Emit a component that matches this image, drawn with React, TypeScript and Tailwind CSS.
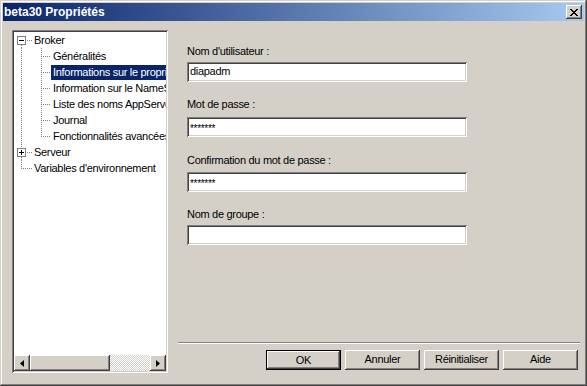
import React from 'react'

const font = "font-['Liberation_Sans',Arial,sans-serif]"
const raised = "shadow-[inset_-1px_-1px_#404040,inset_1px_1px_#fff,inset_-2px_-2px_#808080]"
const sunken = "shadow-[inset_1px_1px_#808080,inset_-1px_-1px_#fff,inset_2px_2px_#404040,inset_-2px_-2px_#d4d0c8]"

type Kind = 'root-open' | 'child' | 'child-last' | 'root-closed' | 'leaf-last'

function Gutter({ kind }: { kind: Kind }) {
    const dot = { stroke: '#808080', strokeDasharray: '1 1', shapeRendering: 'crispEdges' as const }
    const child = kind === 'child' || kind === 'child-last'
    const w = child ? 37 : 18
    return (
        <svg width={w} height={16} className="shrink-0">
            {kind === 'root-open' && <line x1={7.5} y1={13} x2={7.5} y2={16} {...dot} />}
            {child && <line x1={7.5} y1={0} x2={7.5} y2={16} {...dot} />}
            {kind === 'child' && <line x1={27.5} y1={0} x2={27.5} y2={16} {...dot} />}
            {kind === 'child-last' && <line x1={27.5} y1={0} x2={27.5} y2={9} {...dot} />}
            {child && <line x1={29} y1={8.5} x2={37} y2={8.5} {...dot} />}
            {kind === 'root-closed' && (
                <>
                    <line x1={7.5} y1={0} x2={7.5} y2={4} {...dot} />
                    <line x1={7.5} y1={13} x2={7.5} y2={16} {...dot} />
                </>
            )}
            {kind === 'leaf-last' && (
                <>
                    <line x1={7.5} y1={0} x2={7.5} y2={9} {...dot} />
                    <line x1={9} y1={8.5} x2={18} y2={8.5} {...dot} />
                </>
            )}
            {(kind === 'root-open' || kind === 'root-closed') && (
                <>
                    <line x1={13} y1={8.5} x2={18} y2={8.5} {...dot} />
                    <rect x={3.5} y={4.5} width={8} height={8} fill="#fff" stroke="#808080" shapeRendering="crispEdges" />
                    <line x1={5} y1={8.5} x2={10} y2={8.5} stroke="#000" shapeRendering="crispEdges" />
                    {kind === 'root-closed' && <line x1={7.5} y1={6} x2={7.5} y2={11} stroke="#000" shapeRendering="crispEdges" />}
                </>
            )}
        </svg>
    )
}

const tree: { label: string; kind: Kind; selected?: boolean }[] = [
    { label: 'Broker', kind: 'root-open' },
    { label: 'Généralités', kind: 'child' },
    { label: 'Informations sur le propriétaire', kind: 'child', selected: true },
    { label: "Information sur le NameServer", kind: 'child' },
    { label: 'Liste des noms AppServer', kind: 'child' },
    { label: 'Journal', kind: 'child' },
    { label: 'Fonctionnalités avancées', kind: 'child-last' },
    { label: 'Serveur', kind: 'root-closed' },
    { label: "Variables d'environnement", kind: 'leaf-last' },
]

function Field({ label, value, mt, gap, password }: { label: string; value: string; mt: string; gap: string; password?: boolean }) {
    return (
        <div className={mt}>
            <div className="h-[13px] leading-[13px]">{label}</div>
            <div className={`${gap} w-[280px] h-[20px] bg-white ${sunken} px-[3px] leading-[19px] ${password ? 'text-[10px] leading-[14px] pt-[2px]' : ''}`}>
                {value}
            </div>
        </div>
    )
}

function Button({ children, main }: { children: React.ReactNode; main?: boolean }) {
    return (
        <button className={`w-[75px] h-[20px] bg-[#d4d0c8] text-black text-center leading-[18px] ${main ? 'border border-black' : ''}`}>
            <div className={`w-full h-full ${raised}`}>{children}</div>
        </button>
    )
}

export default function App() {
    return (
        <div className={`${font} text-[11px] tracking-[-0.3px] text-black w-[587px] h-[386px] bg-[#d4d0c8] p-[3px] flex flex-col shadow-[inset_-1px_-1px_#404040,inset_1px_1px_#d4d0c8,inset_-2px_-2px_#808080,inset_2px_2px_#fff]`}>
            <div className="h-[18px] shrink-0 flex items-center justify-between bg-[linear-gradient(to_right,#0a246a,#a6caf0)] pl-[1px] pr-[2px]">
                <span className="text-white font-bold text-[12px] tracking-normal leading-[18px]">beta30 Propriétés</span>
                <div className={`w-[16px] h-[14px] bg-[#d4d0c8] ${raised} flex items-center justify-center`}>
                    <svg width="8" height="7" viewBox="0 0 8 7" shapeRendering="crispEdges">
                        <path d="M0 0h2v1h-2zM6 0h2v1h-2zM1 1h2v1h-2zM5 1h2v1h-2zM2 2h4v1h-4zM3 3h2v1h-2zM2 4h4v1h-4zM1 5h2v1h-2zM5 5h2v1h-2zM0 6h2v1h-2zM6 6h2v1h-2z" fill="#000" />
                    </svg>
                </div>
            </div>

            <div className="flex-1 flex pt-[9px] pl-[9px] pr-[1px] pb-[7px]">
                <div className={`w-[156px] h-[343px] bg-white ${sunken} p-[2px] flex flex-col`}>
                    <div className="flex-1 overflow-hidden">
                        {tree.map((item) => (
                            <div key={item.label} className="flex h-[16px] items-center whitespace-nowrap">
                                <Gutter kind={item.kind} />
                                <span className={`px-[2px] h-[15px] leading-[15px] ${item.selected ? 'bg-[#0a246a] text-white' : ''}`}>
                                    {item.label}
                                </span>
                            </div>
                        ))}
                    </div>
                    <div className="h-[16px] flex shrink-0">
                        <div className={`w-[16px] bg-[#d4d0c8] ${raised} flex items-center justify-center`}>
                            <svg width="4" height="7"><path d="M4 0v7L0 3.5z" fill="#000" /></svg>
                        </div>
                        <div className={`w-[80px] bg-[#d4d0c8] ${raised}`} />
                        <div className="flex-1 bg-[repeating-conic-gradient(#fff_0_25%,#d4d0c8_0_50%)] bg-[length:2px_2px]" />
                        <div className={`w-[16px] bg-[#d4d0c8] ${raised} flex items-center justify-center`}>
                            <svg width="4" height="7"><path d="M0 0v7L4 3.5z" fill="#000" /></svg>
                        </div>
                    </div>
                </div>

                <div className="flex-1 ml-[10px] flex flex-col">
                    <div className="pl-[9px] pt-[15px]">
                        <Field label="Nom d'utilisateur :" value="diapadm" mt="" gap="mt-[4px]" />
                        <Field label="Mot de passe :" value="*******" mt="mt-[16px]" gap="mt-[6px]" password />
                        <Field label="Confirmation du mot de passe :" value="*******" mt="mt-[17px]" gap="mt-[5px]" password />
                        <Field label="Nom de groupe :" value="" mt="mt-[16px]" gap="mt-[4px]" />
                    </div>
                    <div className="flex-1" />
                    <div className="mr-[3px] h-[2px] border-t border-t-[#808080] border-b border-b-white" />
                    <div className="flex justify-end gap-[4px] mt-[6px] mr-[5px] mb-[6px]">
                        <Button main>OK</Button>
                        <Button>Annuler</Button>
                        <Button>Réinitialiser</Button>
                        <Button>Aide</Button>
                    </div>
                </div>
            </div>
        </div>
    )
}
